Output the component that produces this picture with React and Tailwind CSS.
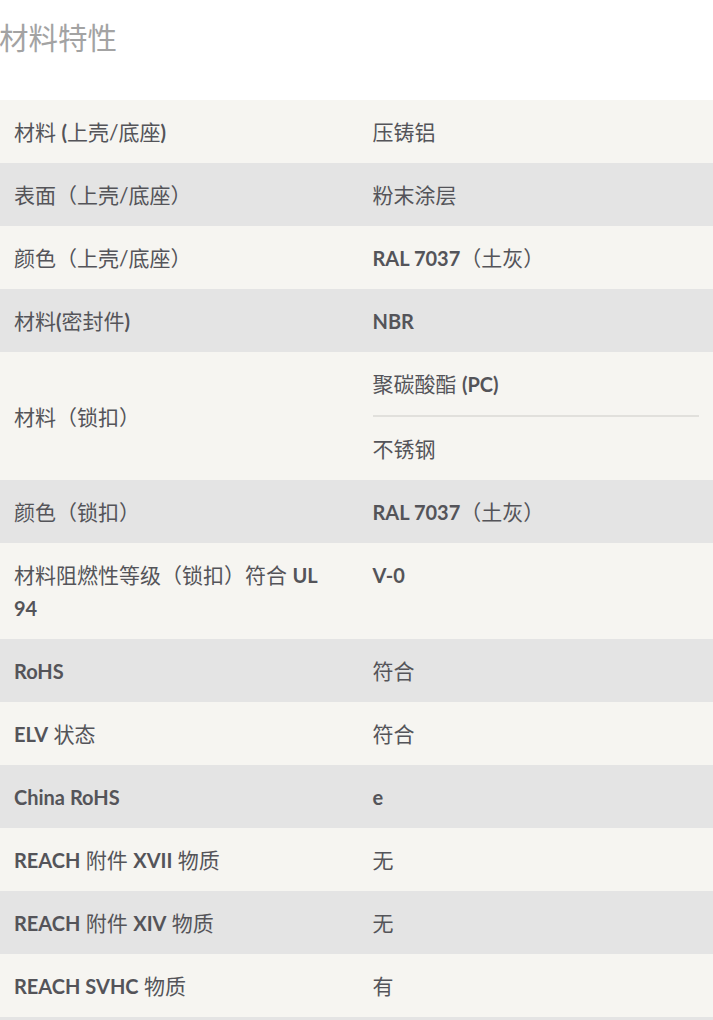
import React from "react";

const B = ({ children }) => <span className="font-bold text-[20px] leading-none">{children}</span>;

const rows = [
  { l: <>材料 <B>(</B>上壳/底座<B>)</B></>, r: ["压铸铝"] },
  { l: <>表面（上壳/底座）</>, r: ["粉末涂层"] },
  { l: <>颜色（上壳/底座）</>, r: [<><B>RAL 7037</B>（土灰）</>] },
  { l: <>材料<B>(</B>密封件<B>)</B></>, r: [<B>NBR</B>] },
  { l: <>材料（锁扣）</>, r: [<>聚碳酸酯 <B>(PC)</B></>, "不锈钢"] },
  { l: <>颜色（锁扣）</>, r: [<><B>RAL 7037</B>（土灰）</>] },
  { l: <>材料阻燃性等级（锁扣）符合 <B>UL 94</B></>, r: [<B>V-0</B>] },
  { l: <B>RoHS</B>, r: ["符合"] },
  { l: <><B>ELV</B> 状态</>, r: ["符合"] },
  { l: <B>China RoHS</B>, r: [<B>e</B>] },
  { l: <><B>REACH</B> 附件 <B>XVII</B> 物质</>, r: ["无"] },
  { l: <><B>REACH</B> 附件 <B>XIV</B> 物质</>, r: ["无"] },
  { l: <><B>REACH SVHC</B> 物质</>, r: ["有"] },
  { l: <>&nbsp;</>, r: [" "] },
];

export default function App() {
  return (
    <div
      className="w-[713px] h-[1020px] overflow-hidden bg-white text-[#545459]"
      style={{ fontFamily: '"Lato", "Noto Sans CJK SC", sans-serif' }}
    >
      <div className="h-[100px] pt-[17px]">
        <h2 className="text-[29.5px] leading-[42px] font-normal text-[#a3a3a3] -ml-[1px]">材料特性</h2>
      </div>
      <div>
        {rows.map((row, i) => (
          <div
            key={i}
            className={`grid grid-cols-2 text-[21px] leading-[33px] ${i % 2 === 0 ? "bg-[#f6f5f1]" : "bg-[#e4e4e4]"}`}
          >
            <div className={`pl-[14px] pr-[14px] py-[15px] flex ${row.r.length > 1 ? "items-center" : "items-start"}`}>
              <div>{row.l}</div>
            </div>
            <div className="pl-[16px] pr-[14px] flex flex-col">
              {row.r.map((v, j) => (
                <div
                  key={j}
                  className={`py-[15px] ${j < row.r.length - 1 ? "border-b-2 border-[#e1e0dc]" : ""}`}
                >
                  {v}
                </div>
              ))}
            </div>
          </div>
        ))}
      </div>
    </div>
  );
}
